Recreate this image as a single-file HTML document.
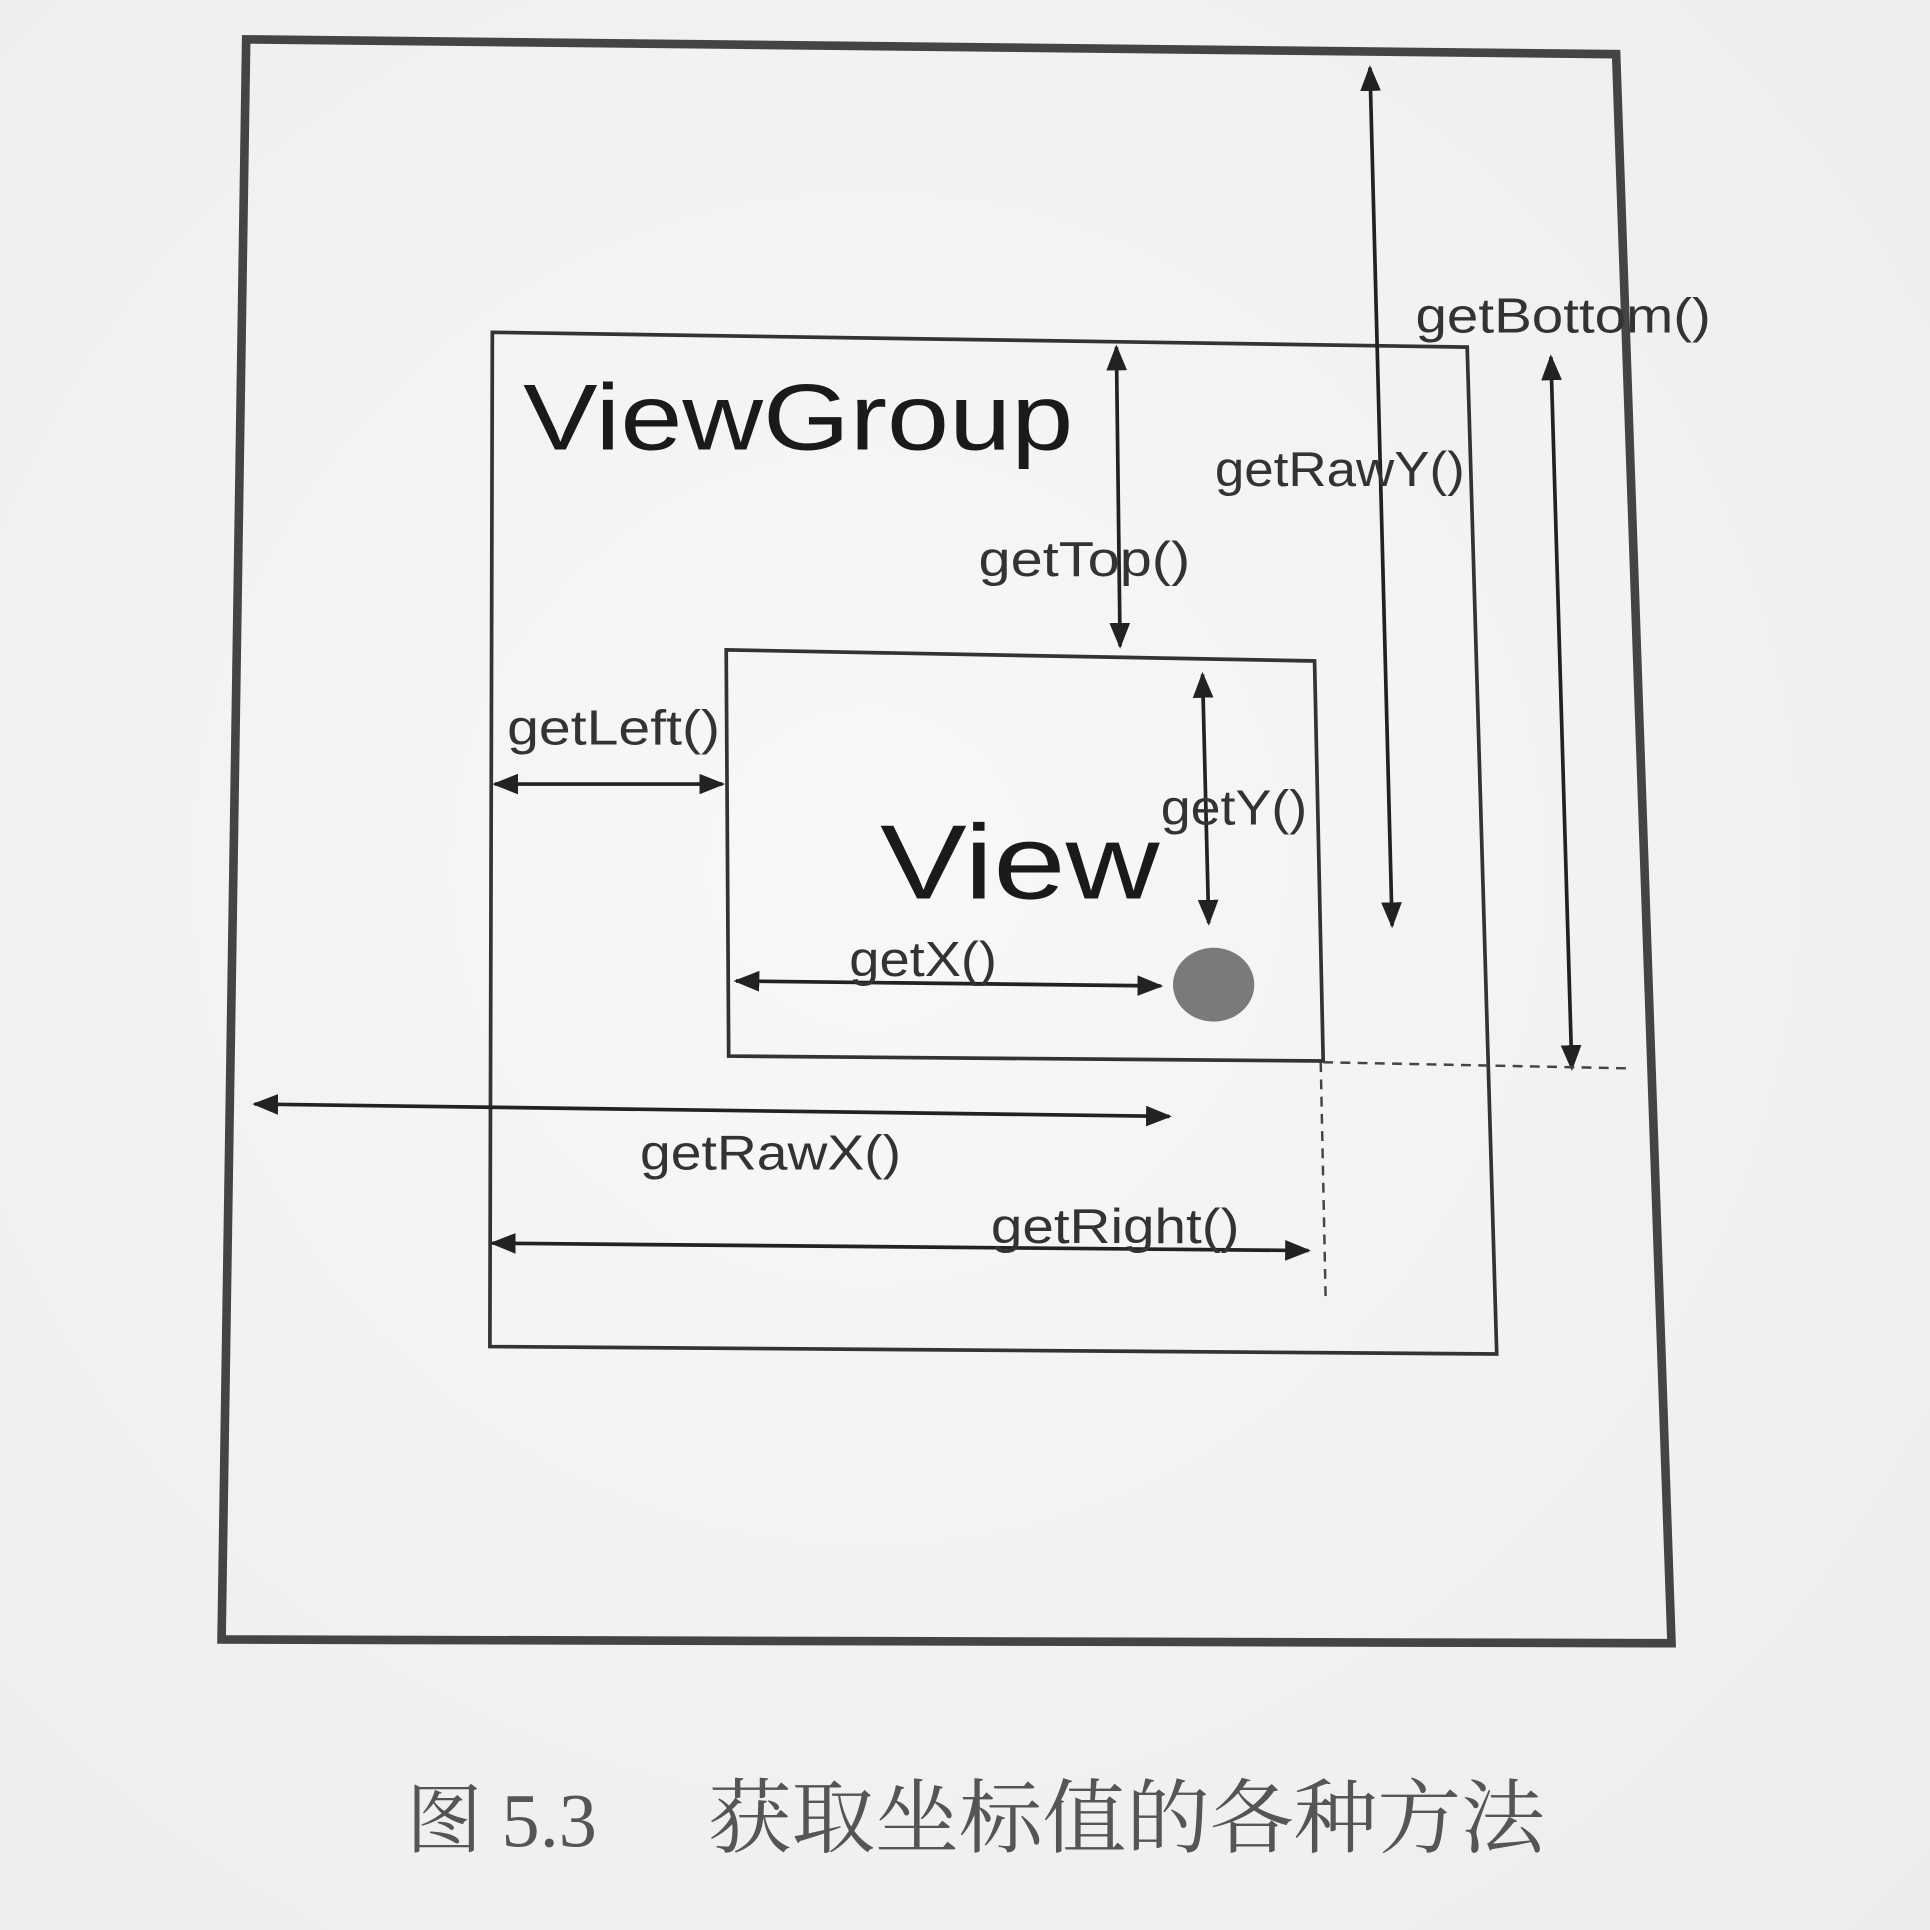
<!DOCTYPE html>
<html><head><meta charset="utf-8"><style>
html,body{margin:0;padding:0;background:#f3f3f3;}
svg{display:block}
.l{font-family:"Liberation Sans","DejaVu Sans",sans-serif;fill:#333;font-size:40px}
</style></head><body>
<svg width="1930" height="1930" viewBox="0 0 1568 1568" xmlns="http://www.w3.org/2000/svg">
<defs>
<radialGradient id="bg" cx="0.45" cy="0.45" r="0.8"><stop offset="0" stop-color="#f8f8f8"/><stop offset="1" stop-color="#ececec"/></radialGradient>
<marker id="a" viewBox="0 0 10 10" refX="9" refY="5" markerWidth="7" markerHeight="7" orient="auto-start-reverse"><path d="M0,1 L10,5 L0,9 Z" fill="#222"/></marker>
</defs>
<rect width="1568" height="1568" fill="url(#bg)"/>
<polygon points="200,32 1313,44 1358,1335 180,1332" fill="none" stroke="#444" stroke-width="7"/>
<polygon points="400,270 1192,282 1216,1100 398,1094" fill="none" stroke="#333" stroke-width="3"/>
<polygon points="590,528 1068,537 1075,862 592,858" fill="none" stroke="#333" stroke-width="3"/>
<g stroke="#222" stroke-width="3" marker-start="url(#a)" marker-end="url(#a)">
<line x1="907" y1="282" x2="910" y2="525"/>
<line x1="1113" y1="55" x2="1131" y2="752"/>
<line x1="1260" y1="290" x2="1277" y2="868"/>
<line x1="977" y1="548" x2="982" y2="750"/>
<line x1="402" y1="637" x2="587" y2="637"/>
<line x1="598" y1="797" x2="943" y2="801"/>
<line x1="207" y1="897" x2="950" y2="907"/>
<line x1="400" y1="1010" x2="1063" y2="1016"/>
</g>
<g stroke="#444" stroke-width="2" stroke-dasharray="8,6">
<line x1="1075" y1="863" x2="1325" y2="868"/>
<line x1="1073" y1="863" x2="1077" y2="1055"/>
</g>
<ellipse cx="986" cy="800" rx="33" ry="30" fill="#7a7a7a"/>
<text x="425" y="365" font-family="'Liberation Sans','DejaVu Sans',sans-serif" font-size="76" fill="#1a1a1a" textLength="447" lengthAdjust="spacingAndGlyphs">ViewGroup</text>
<text x="715" y="730" font-family="'Liberation Sans','DejaVu Sans',sans-serif" font-size="86" fill="#1a1a1a" textLength="227" lengthAdjust="spacingAndGlyphs">View</text>
<text class="l" x="1150" y="270" textLength="240" lengthAdjust="spacingAndGlyphs">getBottom()</text>
<text class="l" x="987" y="395" textLength="203" lengthAdjust="spacingAndGlyphs">getRawY()</text>
<text class="l" x="795" y="468" textLength="172" lengthAdjust="spacingAndGlyphs">getTop()</text>
<text class="l" x="412" y="605" textLength="173" lengthAdjust="spacingAndGlyphs">getLeft()</text>
<text class="l" x="943" y="670" textLength="119" lengthAdjust="spacingAndGlyphs">getY()</text>
<text class="l" x="690" y="793" textLength="120" lengthAdjust="spacingAndGlyphs">getX()</text>
<text class="l" x="520" y="950" fill="#555" textLength="212" lengthAdjust="spacingAndGlyphs">getRawX()</text>
<text class="l" x="805" y="1010" textLength="202" lengthAdjust="spacingAndGlyphs">getRight()</text>
<text x="330" y="1500" font-family="'Liberation Serif','Noto Serif CJK SC',serif" font-size="62" fill="#555">图 5.3</text>
<text x="575" y="1500" font-family="'Liberation Serif','Noto Serif CJK SC',serif" font-size="66" fill="#555" textLength="680" lengthAdjust="spacingAndGlyphs">获取坐标值的各种方法</text>
</svg>
</body></html>
